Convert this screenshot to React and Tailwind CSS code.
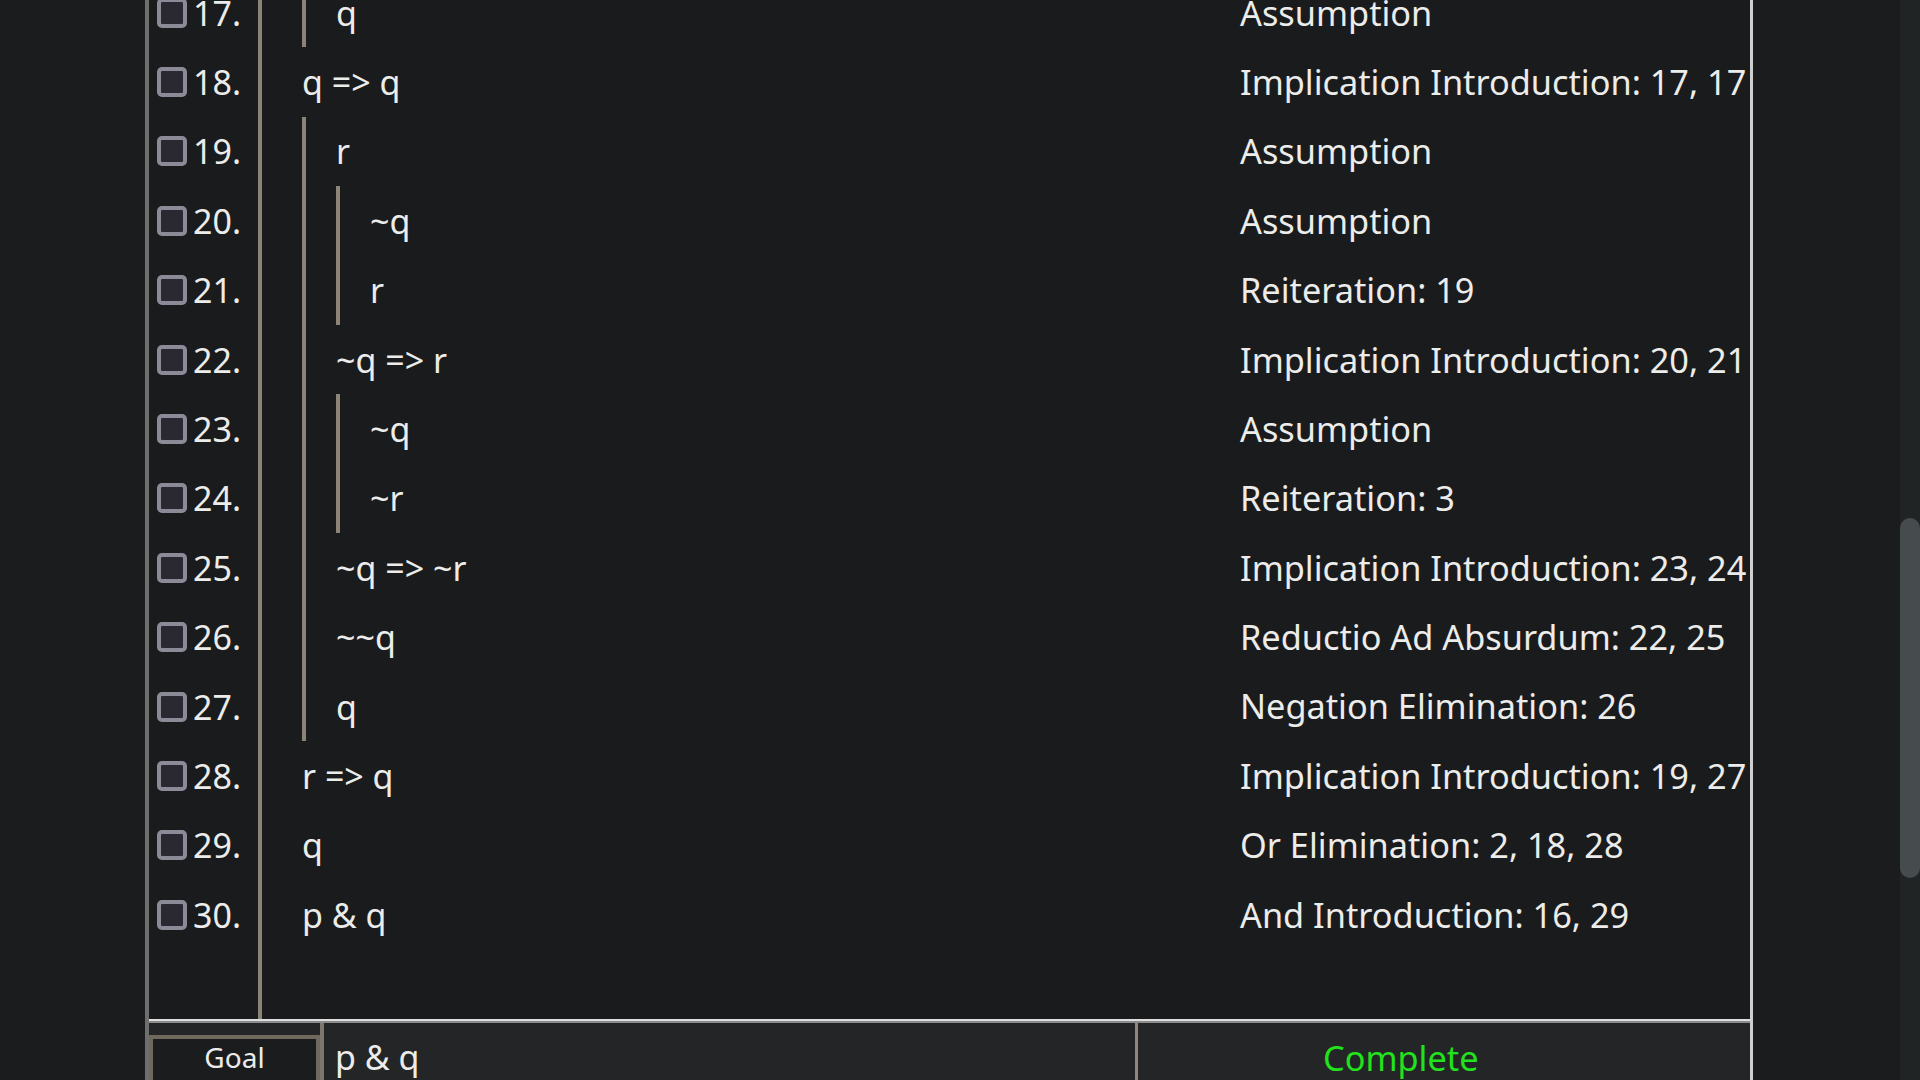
import React from 'react';

const rows = [
  { n: 17, depth: 1, formula: 'q', rule: 'Assumption' },
  { n: 18, depth: 0, formula: 'q => q', rule: 'Implication Introduction: 17, 17' },
  { n: 19, depth: 1, formula: 'r', rule: 'Assumption' },
  { n: 20, depth: 2, formula: '~q', rule: 'Assumption' },
  { n: 21, depth: 2, formula: 'r', rule: 'Reiteration: 19' },
  { n: 22, depth: 1, formula: '~q => r', rule: 'Implication Introduction: 20, 21' },
  { n: 23, depth: 2, formula: '~q', rule: 'Assumption' },
  { n: 24, depth: 2, formula: '~r', rule: 'Reiteration: 3' },
  { n: 25, depth: 1, formula: '~q => ~r', rule: 'Implication Introduction: 23, 24' },
  { n: 26, depth: 1, formula: '~~q', rule: 'Reductio Ad Absurdum: 22, 25' },
  { n: 27, depth: 1, formula: 'q', rule: 'Negation Elimination: 26' },
  { n: 28, depth: 0, formula: 'r => q', rule: 'Implication Introduction: 19, 27' },
  { n: 29, depth: 0, formula: 'q', rule: 'Or Elimination: 2, 18, 28' },
  { n: 30, depth: 0, formula: 'p & q', rule: 'And Introduction: 16, 29' },
];

const ProofRow = ({ row }) => {
  const bars = Array.from({ length: row.depth });
  return (
    <div className="flex h-[69.4px] shrink-0">
      {/* line number + checkbox */}
      <div className="flex w-[113px] shrink-0 items-center border-r-4 border-[#8b8477] pl-[8px]">
        <div className="h-[30px] w-[30px] shrink-0 rounded-[5px] border-4 border-[#8d8a97] bg-[#2a2831]" />
        <span className="ml-[6px] text-[34px] leading-none">{row.n}.</span>
      </div>

      {/* formula with subproof bars */}
      <div className="flex w-[978px] shrink-0 pl-[40px]">
        {bars.map((_, i) => (
          <div key={i} className="h-full w-[34px] shrink-0 border-l-4 border-[#8b8477]" />
        ))}
        <div className="flex items-center text-[34px] leading-none">{row.formula}</div>
      </div>

      {/* justification */}
      <div className="flex flex-1 items-center whitespace-nowrap text-[34.3px] leading-none">{row.rule}</div>
    </div>
  );
};

export default function App() {
  return (
    <div className="flex h-[1080px] w-full overflow-hidden bg-[#1b1c1e] font-['Noto_Sans',sans-serif] text-[#ececea]">
      <div className="w-[145px] shrink-0" />

      <div className="flex w-[1608px] shrink-0 flex-col border-l-4 border-r-[3px] border-l-[#6e6e6e] border-r-[#cfcfcf] bg-[#1a1b1d]">
        {/* proof list */}
        <div className="flex h-[1019px] shrink-0 flex-col overflow-hidden">
          <div className="-mt-[22px] flex flex-col">
            {rows.map((row) => (
              <ProofRow key={row.n} row={row} />
            ))}
          </div>
          <div className="flex flex-1">
            <div className="w-[113px] shrink-0 border-r-4 border-[#8b8477]" />
          </div>
        </div>

        <div className="h-[2px] shrink-0 bg-[#dedede]" />
        <div className="h-[2px] shrink-0 bg-[#8c8c8c]" />

        {/* goal bar */}
        <div className="flex flex-1 bg-[#232527]">
          <div className="w-[171px] shrink-0 pt-[12px]">
            <div className="flex h-[50px] justify-center border-4 border-[#6f695d] bg-[#1b1c1e] pt-[4px] text-[28px] leading-none">
              Goal
            </div>
          </div>
          <div className="w-[4px] shrink-0 bg-[#7d786d]" />
          <div className="w-[811px] shrink-0 pl-[11px] pt-[17px] text-[34px] leading-none">p &amp; q</div>
          <div className="w-[3px] shrink-0 bg-[#8e887c]" />
          <div className="flex-1 pl-[185px] pt-[18px] text-[34.3px] leading-none text-[#22e21c]">Complete</div>
        </div>
      </div>

      <div className="flex-1" />

      {/* scrollbar */}
      <div className="w-[20px] shrink-0 bg-[#212425] pt-[518px]">
        <div className="h-[360px] w-full rounded-[10px] bg-[#464b4d]" />
      </div>
    </div>
  );
}
